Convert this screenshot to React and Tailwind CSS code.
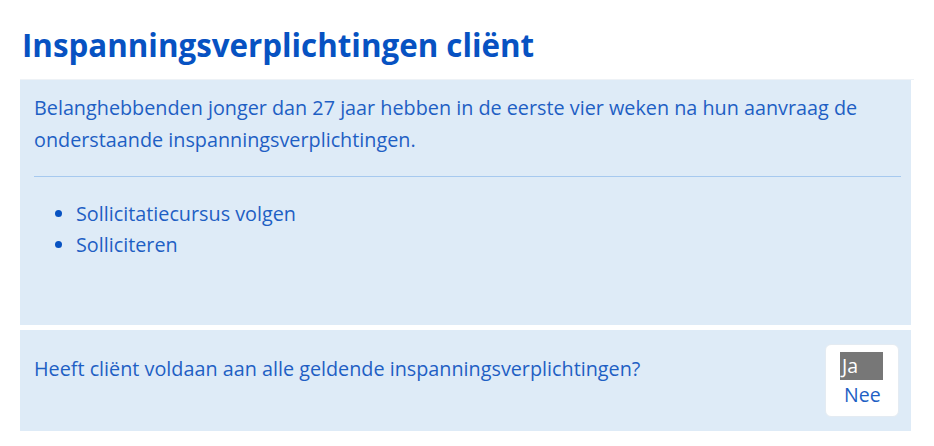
export default function App() {
  return (
    <div className="min-h-screen bg-white px-5 pt-[22px] font-['Open_Sans',sans-serif] text-[#1e5fc4]">
      {/* Titel */}
      <h1 className="pl-[2px] text-[31.3px] font-bold leading-[46px] text-[#0752c2] border-b border-[#eef2f6] pb-[11px]">
        Inspanningsverplichtingen cliënt
      </h1>

      {/* Uitleg en lijst */}
      <div className="w-[891px] h-[245px] bg-[#deebf7] pl-[14px] pr-[10px] pt-[12px]">
        <p className="text-[19.8px] leading-[32px]">
          Belanghebbenden jonger dan 27 jaar hebben in de eerste vier weken na hun aanvraag de
          onderstaande inspanningsverplichtingen.
        </p>
        <hr className="mt-[20px] border-t border-[#a6c9ef]" />
        <ul className="mt-[21px] list-disc pl-[42px] text-[19.8px] leading-[31px] marker:text-[#0752c2]">
          <li>Sollicitatiecursus volgen</li>
          <li>Solliciteren</li>
        </ul>
      </div>

      {/* Vraag */}
      <div className="mt-[5px] w-[891px] h-[101px] bg-[#deebf7] pl-[14px] pr-[12px] pt-[14px] flex items-start justify-between">
        <p className="mt-[9px] text-[19.8px] leading-[32px]">
          Heeft cliënt voldaan aan alle geldende inspanningsverplichtingen?
        </p>
        <div className="w-[74px] h-[73px] bg-white rounded-[6px] border border-[#e4ebf2] pt-[7px] pl-[14px]">
          <div className="w-[43px] h-[28px] bg-[#777777] text-white text-[19.5px] leading-[28px] pl-[2px]">Ja</div>
          <div className="text-[19.5px] leading-[30px] pl-[4px] text-[#1e5fc4]">Nee</div>
        </div>
      </div>
    </div>
  );
}
